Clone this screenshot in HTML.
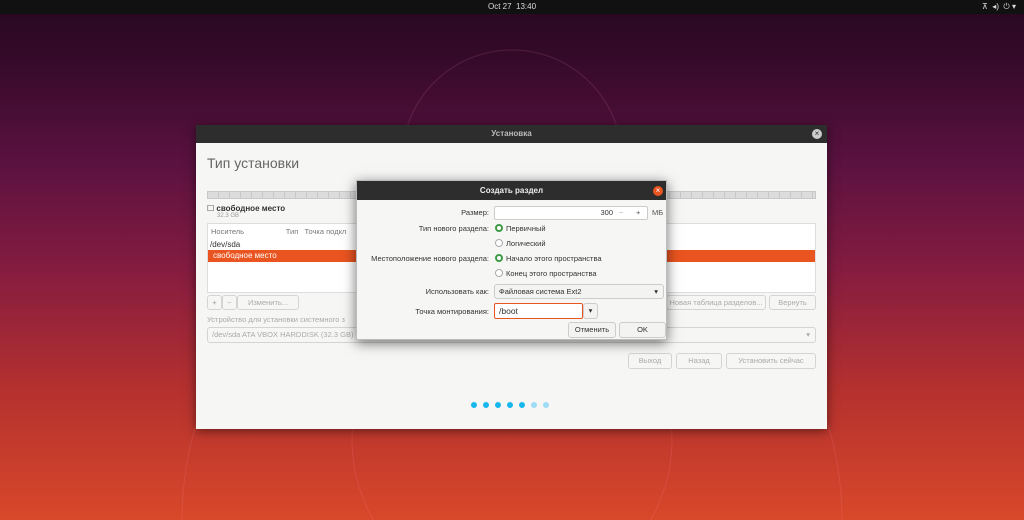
<!DOCTYPE html>
<html style="overflow:hidden;width:1024px;height:520px"><head><meta charset="utf-8"><style>
*{box-sizing:border-box;margin:0;padding:0}
body{width:1024px;height:520px;overflow:hidden;position:relative;font-family:"Liberation Sans","DejaVu Sans",sans-serif;font-size:8px;color:#3c3c3c;
background:linear-gradient(180deg,#260820 0%,#360a2a 12%,#5c1240 32%,#851c40 52%,#b3302f 74%,#d8482a 100%);}
.top{position:absolute;left:0;top:0;width:1024px;height:14px;background:#111;color:#ddd;font-size:8px;text-align:center;line-height:14px}
.abs{position:absolute}
.win{position:absolute;left:196px;top:125px;width:631px;height:304px;background:#f6f6f5;box-shadow:0 2px 10px rgba(0,0,0,.5)}
.wt{height:18px;background:#2d2d2d;color:#bbb;text-align:center;line-height:18px;font-size:8px;font-weight:bold}
.btn{position:absolute;border:1px solid #d4d4d2;border-radius:3px;background:#f6f6f5;color:#aaa;text-align:center;font-size:7.5px}
.dlg{position:absolute;left:356px;top:180px;width:311px;height:160px;background:#f6f6f5;box-shadow:0 3px 12px rgba(0,0,0,.55);border:1px solid #bbb}
.dt{height:19px;background:#2d2d2d;color:#eee;text-align:center;line-height:19px;font-weight:bold;font-size:8px}
.lbl{position:absolute;right:177px;font-size:7.5px;color:#333;text-align:right}
.rad{position:absolute;left:138px;font-size:7.5px;color:#333}
.rad i{display:inline-block;width:8px;height:8px;border-radius:50%;border:1px solid #aaa;background:#fff;vertical-align:-1px;margin-right:3px}
.rad i.on{border:2.5px solid #3e9b45;background:#fff}
.ent{position:absolute;background:#fff;border:1px solid #ccc;border-radius:2px}
.b2{position:absolute;border:1px solid #ccc;border-radius:3px;background:#f3f3f2;color:#333;text-align:center;font-size:7.5px}
</style></head><body>
<svg class="abs" style="left:0;top:0;display:block" width="1024" height="520"><g fill="none" stroke="rgba(255,150,180,.15)" stroke-width="1">
<circle cx="512" cy="440" r="160"/><circle cx="512" cy="160" r="110"/><circle cx="512" cy="520" r="330"/></g></svg>
<div class="top">Oct 27&nbsp; 13:40
<span style="position:absolute;right:8px;top:0;font-size:8px">⊼ &nbsp;◂) &nbsp;⏻ ▾</span></div>
<div class="win"><div class="wt">Установка</div>
<div style="position:absolute;left:616px;top:4px;width:10px;height:10px;border-radius:50%;background:#ccc;color:#2d2d2d;font-size:8px;line-height:10px;text-align:center">×</div>
<div class="abs" style="left:11px;top:30px;font-size:14px;color:#666">Тип установки</div>
<div class="abs" style="left:11px;top:66px;width:609px;height:8px;border:1px solid #c9c9c9;background:repeating-linear-gradient(90deg,#dcdcdc 0 10px,#c8c8c8 10px 11px)"></div>
<div class="abs" style="left:11px;top:79px;font-size:8px;font-weight:bold;color:#333">☐ свободное место</div>
<div class="abs" style="left:21px;top:88px;font-size:6px;color:#999">32.3 GB</div>
<div class="abs" style="left:11px;top:98px;width:609px;height:70px;background:#fff;border:1px solid #ddd">
<div class="abs" style="left:3px;top:3px;font-size:7.5px;color:#777">Носитель&nbsp;&nbsp;&nbsp;&nbsp;&nbsp;&nbsp;&nbsp;&nbsp;&nbsp;&nbsp;&nbsp;&nbsp;&nbsp;&nbsp;&nbsp;&nbsp;&nbsp;&nbsp;&nbsp;&nbsp;Тип&nbsp;&nbsp;&nbsp;Точка подкл</div>
<div class="abs" style="left:2px;top:16px;font-size:8px;color:#333">/dev/sda</div>
<div class="abs" style="left:0;top:26px;width:607px;height:12px;background:#e95420;color:#fff;font-size:8px;padding-left:5px;line-height:12px">свободное место</div></div>
<div class="btn" style="left:11px;top:170px;width:15px;height:15px;line-height:13px;color:#999">+</div>
<div class="btn" style="left:26px;top:170px;width:15px;height:15px;line-height:13px">−</div>
<div class="btn" style="left:41px;top:170px;width:62px;height:15px;line-height:13px">Изменить...</div>
<div class="btn" style="left:470px;top:170px;width:100px;height:15px;line-height:13px">Новая таблица разделов...</div>
<div class="btn" style="left:573px;top:170px;width:47px;height:15px;line-height:13px">Вернуть</div>
<div class="abs" style="left:11px;top:190px;font-size:7.5px;color:#aaa">Устройство для установки системного з</div>
<div class="btn" style="left:11px;top:202px;width:609px;height:16px;line-height:14px;text-align:left;padding-left:4px">/dev/sda ATA VBOX HARDDISK (32.3 GB)<span style="position:absolute;right:5px">▾</span></div>
<div class="btn" style="left:432px;top:228px;width:44px;height:16px;line-height:14px">Выход</div>
<div class="btn" style="left:480px;top:228px;width:46px;height:16px;line-height:14px">Назад</div>
<div class="btn" style="left:530px;top:228px;width:90px;height:16px;line-height:14px">Установить сейчас</div>
<div class="abs" style="left:275px;top:277px;line-height:6px;height:6px">
<span style="display:inline-block;width:6px;height:6px;border-radius:50%;background:#19b6ee;margin-right:6px"></span><span style="display:inline-block;width:6px;height:6px;border-radius:50%;background:#19b6ee;margin-right:6px"></span><span style="display:inline-block;width:6px;height:6px;border-radius:50%;background:#19b6ee;margin-right:6px"></span><span style="display:inline-block;width:6px;height:6px;border-radius:50%;background:#19b6ee;margin-right:6px"></span><span style="display:inline-block;width:6px;height:6px;border-radius:50%;background:#19b6ee;margin-right:6px"></span><span style="display:inline-block;width:6px;height:6px;border-radius:50%;background:#9fdcf5;margin-right:6px"></span><span style="display:inline-block;width:6px;height:6px;border-radius:50%;background:#9fdcf5"></span></div>
</div>
<div class="dlg"><div class="dt">Создать раздел</div>
<div style="position:absolute;left:296px;top:5px;width:10px;height:10px;border-radius:50%;background:#e95420;color:#fff;font-size:8px;line-height:10px;text-align:center">×</div>
<div class="lbl" style="top:27px">Размер:</div>
<div class="ent" style="left:137px;top:25px;width:154px;height:14px;font-size:7.5px;line-height:12px"><span style="position:absolute;left:0;width:118px;text-align:right;color:#333">300</span><span style="position:absolute;left:124px;color:#aaa">−</span><span style="position:absolute;left:141px;color:#555">+</span></div>
<div class="abs" style="left:295px;top:27px;font-size:7.5px;color:#555">МБ</div>
<div class="lbl" style="top:43px">Тип нового раздела:</div>
<div class="rad" style="top:43px"><i class="on"></i>Первичный</div>
<div class="rad" style="top:58px"><i></i>Логический</div>
<div class="lbl" style="top:73px">Местоположение нового раздела:</div>
<div class="rad" style="top:73px"><i class="on"></i>Начало этого пространства</div>
<div class="rad" style="top:88px"><i></i>Конец этого пространства</div>
<div class="lbl" style="top:106px">Использовать как:</div>
<div class="b2" style="left:137px;top:103px;width:170px;height:15px;line-height:13px;text-align:left;padding-left:4px">Файловая система Ext2<span style="position:absolute;right:5px">▾</span></div>
<div class="lbl" style="top:126px">Точка монтирования:</div>
<div class="ent" style="left:137px;top:122px;width:89px;height:16px;border:1px solid #e95420;font-size:8.5px;padding-left:4px;line-height:14px;color:#333">/boot</div>
<div class="b2" style="left:226px;top:122px;width:15px;height:16px;line-height:14px">▾</div>
<div class="b2" style="left:211px;top:141px;width:48px;height:16px;line-height:14px">Отменить</div>
<div class="b2" style="left:262px;top:141px;width:47px;height:16px;line-height:14px">OK</div>
</div>
</body></html>
